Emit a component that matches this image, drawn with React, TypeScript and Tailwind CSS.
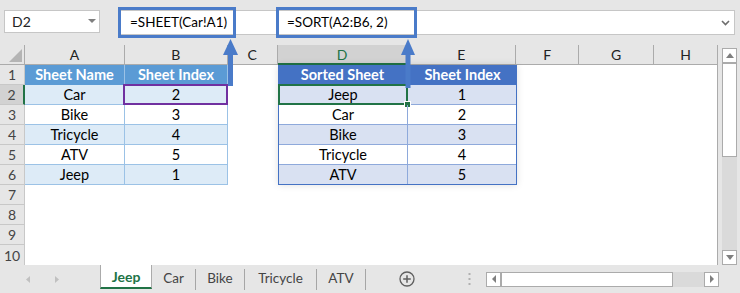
import React from "react";
import clsx from "clsx";

const cols = [
  { l: "A", w: "w-[100px]" },
  { l: "B", w: "w-[103px]" },
  { l: "C", w: "w-[50px]" },
  { l: "D", w: "w-[130px]", sel: true },
  { l: "E", w: "w-[109px]" },
  { l: "F", w: "w-[63px]" },
  { l: "G", w: "w-[75px]" },
  { l: "H", w: "w-[63px]" },
];

const sheets = [
  ["Car", "2"],
  ["Bike", "3"],
  ["Tricycle", "4"],
  ["ATV", "5"],
  ["Jeep", "1"],
];

const sorted = [
  ["Jeep", "1"],
  ["Car", "2"],
  ["Bike", "3"],
  ["Tricycle", "4"],
  ["ATV", "5"],
];

const tabs = [
  { name: "Car", w: "w-[43px]" },
  { name: "Bike", w: "w-[48px]" },
  { name: "Tricycle", w: "w-[71px]" },
  { name: "ATV", w: "w-[48px]" },
];

const Sep = () => <div className="w-px h-[21px] bg-[#a6a6a6] self-center" />;

const App: React.FC = () => {
  return (
    <div className="relative w-[740px] h-[293px] overflow-hidden bg-[#e6e6e6] font-['Lato',sans-serif] text-black">
      {/* formula bar */}
      <div className="h-[45px] flex items-start pt-[10px]">
        <div className="ml-[4px] w-[96px] h-[23px] bg-white border border-[#c6c6c6] flex items-center justify-between pl-[7px] pr-[3px]">
          <span className="text-[14px] text-[#222]">D2</span>
          <svg width="8" height="5" viewBox="0 0 8 5">
            <polygon points="0,0 8,0 4,4" fill="#7f7f7f" />
          </svg>
        </div>
        <div className="ml-[19px] w-[616px] h-[25px] bg-white border border-[#c6c6c6] flex items-center text-[13.5px]">
          <span className="pl-[10px] w-[167px]">=SHEET(Car!A1)</span>
          <span>=SORT(A2:B6, 2)</span>
          <svg className="ml-auto mr-[4px]" width="9" height="6" viewBox="0 0 9 6">
            <polyline points="1,1 4.5,4.5 8,1" fill="none" stroke="#6d6d6d" strokeWidth="1.6" />
          </svg>
        </div>
      </div>

      {/* sheet */}
      <div className="flex h-[220px]">
        <div className="w-[718px] flex flex-col border-r border-[#ababab]">
          {/* column headers */}
          <div className="flex h-[20px] text-[14px] text-[#222]">
            <div className="w-[25px] border-r border-b border-[#ababab] flex items-end justify-end pr-[2px] pb-[2px]">
              <svg width="13" height="13" viewBox="0 0 13 13">
                <polygon points="0,13 13,13 13,0" fill="#b4b4b4" />
              </svg>
            </div>
            {cols.map((c) => (
              <div
                key={c.l}
                className={clsx(
                  c.w,
                  "flex items-center justify-center border-b border-[#ababab]",
                  c.l !== "H" && "border-r",
                  c.sel && "bg-[#d2d2d2] text-[#217346] border-b-2 border-b-[#217346]"
                )}
              >
                {c.l}
              </div>
            ))}
          </div>

          <div className="flex flex-1">
            {/* row headers */}
            <div className="w-[25px] flex flex-col text-[14px] text-[#444]">
              {Array.from({ length: 10 }, (_, i) => i + 1).map((n) => (
                <div
                  key={n}
                  className={clsx(
                    "h-[20px] flex items-center justify-center border-r border-b border-[#c8c8c8]",
                    n === 2 && "bg-[#d2d2d2] border-r-2 border-r-[#217346]",
                    n === 10 && "border-b-0"
                  )}
                >
                  {n}
                </div>
              ))}
            </div>

            {/* cells */}
            <div className="flex-1 bg-white flex items-start text-[14.5px]">
              {/* table 1 */}
              <div className="w-[203px] flex flex-col">
                <div className="flex h-[20px] bg-[#5b9bd5] text-white font-bold">
                  <div className="w-[100px] flex items-center justify-center border-r border-[#9bc2e6]">Sheet Name</div>
                  <div className="w-[103px] flex items-center justify-center border-r border-[#9bc2e6]">Sheet Index</div>
                </div>
                {sheets.map(([name, idx], i) => (
                  <div key={name} className={clsx("flex h-[20px]", i % 2 === 0 ? "bg-[#ddebf7]" : "bg-white")}>
                    <div className="w-[100px] flex items-center justify-center border-r border-b border-[#9bc2e6]">{name}</div>
                    <div className="relative w-[103px] flex items-center justify-center border-r border-b border-[#9bc2e6]">
                      {idx}
                      {i === 0 && (
                        <span className="absolute -left-[2px] -top-[1px] -right-[1px] -bottom-[1px] border-2 border-[#7030a0]" />
                      )}
                    </div>
                  </div>
                ))}
              </div>

              <div className="w-[50px]" />

              {/* table 2 */}
              <div className="w-[239px] flex flex-col shadow-[0_0_7px_rgba(0,0,0,0.13)]">
                <div className="flex h-[20px] bg-[#4472c4] text-white font-bold">
                  <div className="w-[130px] flex items-center justify-center border-r border-[#8ea9db]">Sorted Sheet</div>
                  <div className="w-[109px] flex items-center justify-center">Sheet Index</div>
                </div>
                {sorted.map(([name, idx], i) => (
                  <div
                    key={name}
                    className={clsx(
                      "flex h-[20px] border-x border-[#4472c4]",
                      i % 2 === 0 ? "bg-[#d9e1f2]" : "bg-white",
                      i === 4 && "border-b"
                    )}
                  >
                    <div
                      className={clsx(
                        "relative w-[129px] flex items-center justify-center border-r border-[#8ea9db]",
                        i < 4 && "border-b"
                      )}
                    >
                      {name}
                      {i === 0 && (
                        <>
                          <span className="absolute -left-[1px] -top-[1px] -right-[1px] -bottom-[1px] border-2 border-[#217346]" />
                          <span className="absolute -right-[4px] -bottom-[4px] w-[7px] h-[7px] bg-[#217346] border border-white" />
                        </>
                      )}
                    </div>
                    <div className={clsx("w-[108px] flex items-center justify-center border-[#8ea9db]", i < 4 && "border-b")}>
                      {idx}
                    </div>
                  </div>
                ))}
              </div>
            </div>
          </div>
          <div className="h-px bg-[#ababab]" />
        </div>

        {/* vertical scrollbar */}
        <div className="ml-[4px] w-[15px] flex flex-col pt-[3px]">
          <div className="h-[15px] bg-white border border-[#ababab] flex items-center justify-center">
            <svg width="8" height="5" viewBox="0 0 8 5">
              <polygon points="0,5 8,5 4,0" fill="#7f7f7f" />
            </svg>
          </div>
          <div className="flex-1 bg-[#dadada] flex flex-col">
            <div className="h-[94px] bg-white border border-[#ababab]" />
          </div>
          <div className="h-[15px] bg-white border border-[#ababab] flex items-center justify-center">
            <svg width="8" height="5" viewBox="0 0 8 5">
              <polygon points="0,0 8,0 4,5" fill="#7f7f7f" />
            </svg>
          </div>
        </div>
      </div>

      {/* sheet tabs */}
      <div className="flex h-[28px] text-[13.5px] text-[#444]">
        <div className="w-[100px] flex items-center">
          <svg className="ml-[26px]" width="4" height="7" viewBox="0 0 4 7">
            <polygon points="4,0 4,7 0,3.5" fill="#c0c0c0" />
          </svg>
          <svg className="ml-[25px]" width="4" height="7" viewBox="0 0 4 7">
            <polygon points="0,0 0,7 4,3.5" fill="#c0c0c0" />
          </svg>
        </div>
        <div className="w-[52px] h-[24px] bg-white border-x border-[#ababab] border-b-2 border-b-[#217346] flex items-center justify-center font-bold text-[#217346] text-[14px]">
          Jeep
        </div>
        {tabs.map((t, i) => (
          <React.Fragment key={t.name}>
            <div className={clsx(t.w, "flex items-center justify-center pb-[1px]")}>{t.name}</div>
            {i < tabs.length - 1 && <Sep />}
          </React.Fragment>
        ))}
        <Sep />
        <div className="w-[82px] flex items-center justify-center">
          <svg width="16" height="16" viewBox="0 0 16 16">
            <circle cx="8" cy="8" r="7" fill="none" stroke="#5f5f5f" strokeWidth="1.3" />
            <path d="M8 4.2v7.6M4.2 8h7.6" stroke="#5f5f5f" strokeWidth="1.5" />
          </svg>
        </div>
        <div className="w-[38px] flex items-center pl-[20px]">
          <svg width="3" height="12" viewBox="0 0 3 12">
            <rect x="0.5" y="0" width="2" height="2" fill="#b0b0b0" />
            <rect x="0.5" y="5" width="2" height="2" fill="#b0b0b0" />
            <rect x="0.5" y="10" width="2" height="2" fill="#b0b0b0" />
          </svg>
        </div>
        <div className="w-[233px] h-[15px] self-center flex">
          <div className="w-[15px] bg-white border border-[#ababab] flex items-center justify-center">
            <svg width="4" height="8" viewBox="0 0 4 8">
              <polygon points="4,0 4,8 0,4" fill="#7f7f7f" />
            </svg>
          </div>
          <div className="w-[172px] bg-white border border-[#ababab]" />
          <div className="flex-1 bg-[#dadada]" />
          <div className="w-[15px] bg-white border border-[#ababab] flex items-center justify-center">
            <svg width="4" height="8" viewBox="0 0 4 8">
              <polygon points="0,0 0,8 4,4" fill="#7f7f7f" />
            </svg>
          </div>
        </div>
      </div>

      {/* annotation boxes and arrows */}
      <div className="absolute left-[118px] top-[7px] w-[118px] h-[31px] border-[3px] border-[#4a7bc9]" />
      <div className="absolute left-[276px] top-[7px] w-[141px] h-[31px] border-[3px] border-[#4a7bc9]" />
      <svg className="absolute inset-0 pointer-events-none" width="740" height="293" viewBox="0 0 740 293">
        <polygon points="223,55 238,55 230.5,39" fill="#4a7bc9" />
        <rect x="228" y="54" width="5" height="32" fill="#4a7bc9" />
        <polygon points="401,55 415,55 408,39" fill="#4a7bc9" />
        <rect x="405.5" y="54" width="5" height="34" fill="#4a7bc9" />
      </svg>
    </div>
  );
};

export default App;
